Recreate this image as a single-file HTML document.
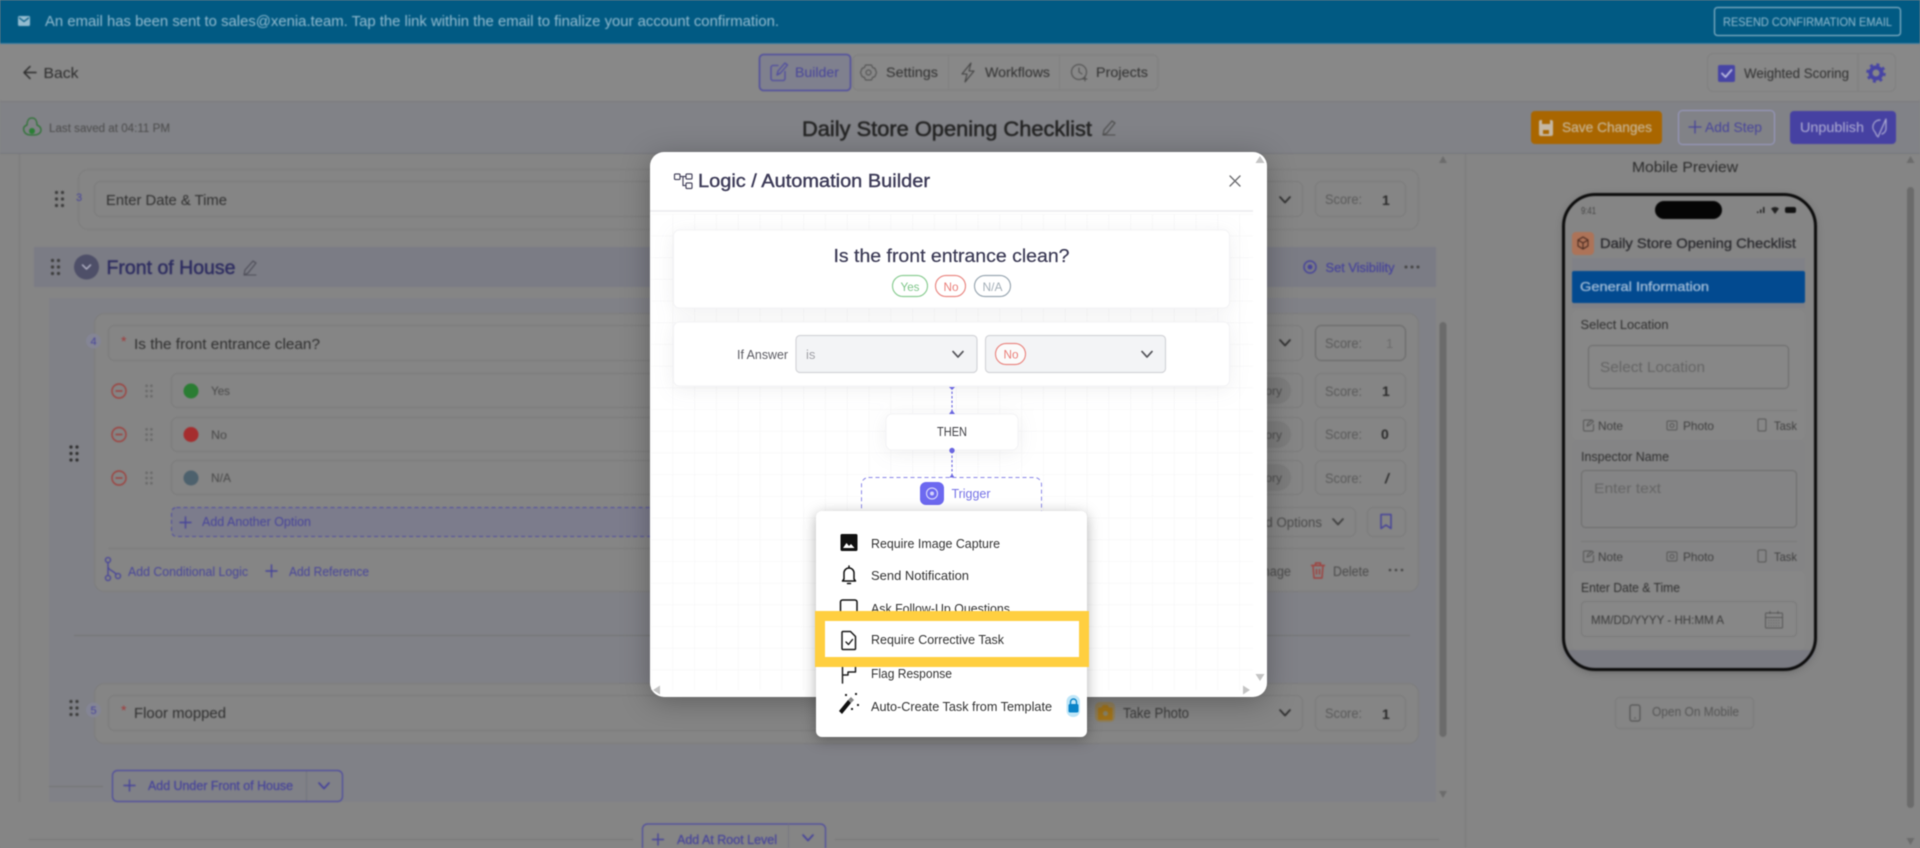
<!DOCTYPE html>
<html><head><meta charset="utf-8"><title>Logic / Automation Builder</title>
<style>
html,body{margin:0;padding:0;width:1920px;height:848px;overflow:hidden;background:#858585}
svg{display:block;filter:blur(.45px)}
text{font-family:"Liberation Sans",sans-serif}
.s{fill:none;stroke-linecap:round;stroke-linejoin:round}
</style></head><body>
<svg width="1920" height="848" viewBox="0 0 1920 848" xmlns="http://www.w3.org/2000/svg">
<defs>
<g id="drag"><circle cx="-3" cy="-6.500" r="1.600"/><circle cx="3" cy="-6.500" r="1.600"/><circle cx="-3" cy="0" r="1.600"/><circle cx="3" cy="0" r="1.600"/><circle cx="-3" cy="6.500" r="1.600"/><circle cx="3" cy="6.500" r="1.600"/></g>
<path id="chev" class="s" d="M-5-3L0 2.500 5-3" stroke-width="1.700"/>
<pattern id="grid" width="21.800" height="21.700" patternUnits="userSpaceOnUse" x="672.600" y="214"><path d="M0 0H21.800M0 0V21.700" stroke="#f4f4f5" fill="none"/></pattern>
</defs>

<g style="filter:blur(.5px)">
<!-- base -->
<rect width="1920" height="848" fill="#858585"/>
<rect width="1920" height="43" fill="#015a83"/>
<rect y="43" width="1920" height="1" fill="#3f7fa3"/>
<rect y="44" width="1920" height="57" fill="#888"/>
<rect y="101" width="1920" height="1" fill="#7b7c7e"/>
<rect y="102" width="1920" height="51" fill="#818287"/>
<rect y="153" width="1920" height="1" fill="#75767c"/>

<!-- banner -->
<rect x="18" y="16" width="12" height="10" rx="1.500" fill="#94bcd0"/><path class="s" d="M19.500 18l4.500 3.500 4.500-3.500" stroke="#015a83" stroke-width="1.200"/>
<text x="45" y="26" font-size="14.500" fill="#95bdd1" textLength="734" lengthAdjust="spacingAndGlyphs">An email has been sent to sales@xenia.team. Tap the link within the email to finalize your account confirmation.</text>
<rect x="1714.500" y="7.500" width="186" height="28" rx="3" fill="none" stroke="#a2c2d3"/>
<text x="1723" y="26" font-size="11.500" fill="#95bdd1" textLength="169" lengthAdjust="spacingAndGlyphs">RESEND CONFIRMATION EMAIL</text>

<!-- back -->
<path class="s" d="M36 72.500H25M30 66.500l-6 6 6 6" stroke="#2c2c2c" stroke-width="1.500"/>
<text x="43.500" y="78" font-size="15" fill="#2c2c2c" textLength="35" lengthAdjust="spacingAndGlyphs">Back</text>

<!-- tabs -->
<rect x="853" y="55" width="305" height="35" rx="5" fill="#888" stroke="#7f7f7f"/>
<path d="M948.500 55v35M1059.500 55v35" stroke="#7f7f7f"/>
<rect x="759.500" y="54.500" width="91" height="36" rx="4" fill="#7f808e" stroke="#4f4ca0" stroke-width="1.500"/>
<path class="s" d="M778 65.500h-5a2 2 0 0 0-2 2v11a2 2 0 0 0 2 2h10a2 2 0 0 0 2-2v-7M777 75l1-4 7-8 2.500 2-7 8z" stroke="#4f4ca0" stroke-width="1.300"/>
<text x="795" y="77" font-size="14" fill="#47449a" textLength="44" lengthAdjust="spacingAndGlyphs">Builder</text>
<circle cx="868.500" cy="72.500" r="2.500" class="s" stroke="#4a4a4a" stroke-width="1"/><path class="s" d="M865.500 65h6l1 2.500 2.500 1 1.500 4-1.500 4-2.500 1-1 2.500h-6l-1-2.500-2.500-1-1.500-4 1.500-4 2.500-1z" stroke="#4a4a4a" stroke-width="1"/>
<text x="886" y="77" font-size="14" fill="#2f2f2f" textLength="52" lengthAdjust="spacingAndGlyphs">Settings</text>
<path class="s" d="M971 63l-9 11h5l-2 8 9-11h-5z" stroke="#3f3f3f" stroke-width="1"/>
<text x="985" y="77" font-size="14" fill="#2f2f2f" textLength="65" lengthAdjust="spacingAndGlyphs">Workflows</text>
<circle cx="1079" cy="72" r="7.500" class="s" stroke="#4a4a4a" stroke-width="1"/><path class="s" d="M1079 68v4l3 2M1083 79h4M1085 77v4" stroke="#4a4a4a" stroke-width="1"/>
<text x="1096" y="77" font-size="14" fill="#2f2f2f" textLength="52" lengthAdjust="spacingAndGlyphs">Projects</text>

<!-- weighted -->
<rect x="1707.500" y="53.500" width="188" height="38" rx="6" fill="#888" stroke="#7f7f7f"/>
<path d="M1858 54v37" stroke="#7f7f7f"/>
<rect x="1718" y="65" width="17" height="17" rx="2" fill="#4744a5"/><path class="s" d="M1722 73.500l3.500 3.500 6-7" stroke="#bcbce0" stroke-width="1.800"/>
<text x="1744" y="78" font-size="14" fill="#2f2f2f" textLength="105" lengthAdjust="spacingAndGlyphs">Weighted Scoring</text>
<circle cx="1876" cy="73" r="5.500" fill="none" stroke="#4744a5" stroke-width="4"/><circle cx="1876" cy="73" r="8.500" fill="none" stroke="#4744a5" stroke-width="2.500" stroke-dasharray="3 3.700"/>

<!-- save row -->
<path class="s" d="M32 118c-4 0-5 4-5 7-3 1-4 3-3 6 1 3 4 4 7 4h3c4 0 7-2 7-5 0-3-2-4-4-5 0-3-1-7-5-7z" stroke="#2a7332" stroke-width="1.300"/><circle cx="32" cy="131" r="3" fill="#2a7f35"/>
<text x="49" y="132" font-size="11.500" fill="#4a4a4a" textLength="121" lengthAdjust="spacingAndGlyphs">Last saved at 04:11 PM</text>
<text x="802" y="136" font-size="21" fill="#242424" stroke="#242424" stroke-width=".5" textLength="290" lengthAdjust="spacingAndGlyphs">Daily Store Opening Checklist</text>
<path class="s" d="M1103 135l1-5 8-9 3 2-8 10zM1103 135h12" stroke="#4a4a4a" stroke-width="1.100"/>
<rect x="1531" y="111" width="131" height="33" rx="4" fill="#a96600"/>
<rect x="1539" y="120" width="14" height="16" rx="2" fill="#c4b8a6"/><rect x="1542" y="120" width="8" height="4" fill="#a96600"/><rect x="1543" y="130" width="6" height="4" fill="#a96600"/>
<text x="1562" y="132" font-size="14" fill="#c8b594" stroke="#c8b594" stroke-width=".2" textLength="90" lengthAdjust="spacingAndGlyphs">Save Changes</text>
<rect x="1678.500" y="110.500" width="96" height="34" rx="4" fill="none" stroke="#9a9ac6"/>
<path class="s" d="M1695 121v12M1689 127h12" stroke="#47449a" stroke-width="1.300"/>
<text x="1705" y="132" font-size="14" fill="#47449a" textLength="57" lengthAdjust="spacingAndGlyphs">Add Step</text>
<rect x="1790" y="111" width="106" height="33" rx="4" fill="#4641a2"/>
<text x="1800" y="132" font-size="14" fill="#b0aed4" textLength="64" lengthAdjust="spacingAndGlyphs">Unpublish</text>
<path class="s" d="M1880 120a7 7 0 0 0-5 12l2 4M1886 119l-8 18" stroke="#b0aed4" stroke-width="1.200"/><path class="s" d="M1886 120v8a6 6 0 0 1-4 6" stroke="#b0aed4" stroke-width="1.200"/>

<!-- left panel -->
<path d="M19.500 154v648" stroke="#7a7a7a"/>
<rect x="49" y="298" width="1387" height="504" fill="#808187"/>
<rect x="34" y="247" width="1402" height="40" fill="#7b7c85"/>
<rect x="78.500" y="169.500" width="1340" height="60" rx="10" fill="#858585" stroke="#7c7c7c"/>
<rect x="94.500" y="181.500" width="1208" height="35" rx="6" fill="#858585" stroke="#7b7b7b"/>
<rect x="1315.500" y="181.500" width="90" height="35" rx="6" fill="#858585" stroke="#7b7b7b"/>
<use href="#drag" x="59.500" y="199" fill="#3c3c3c"/>
<text x="76" y="201" font-size="11" fill="#47449a">3</text>
<text x="106" y="205" font-size="15" fill="#2f2f2f" textLength="121" lengthAdjust="spacingAndGlyphs">Enter Date &amp; Time</text>
<use href="#chev" x="1285" y="200" stroke="#2f2f2f"/>
<text x="1325" y="204" font-size="14" fill="#5a5a5a" textLength="37" lengthAdjust="spacingAndGlyphs">Score:</text>
<text x="1382" y="205" font-size="14" font-weight="bold" fill="#2a2a2a">1</text>

<use href="#drag" x="55.500" y="267" fill="#3c3c3c"/>
<circle cx="86.500" cy="267" r="12.500" fill="#4e4f68"/><path class="s" d="M82.500 265l4 4 4-4" stroke="#b5b5c8" stroke-width="1.500"/>
<text x="106.500" y="274" font-size="19" fill="#2d2c60" stroke="#2d2c60" stroke-width=".45" textLength="129" lengthAdjust="spacingAndGlyphs">Front of House</text>
<path class="s" d="M244 275l1-5 8-9 3 2-8 10zM244 275h12" stroke="#4d4d58" stroke-width="1.100"/>
<circle cx="1310" cy="267" r="6" fill="none" stroke="#47449a" stroke-width="1.500"/><circle cx="1310" cy="267" r="2.500" fill="#47449a"/>
<text x="1325.500" y="272" font-size="13" fill="#47449a" stroke="#47449a" stroke-width=".25" textLength="69" lengthAdjust="spacingAndGlyphs">Set Visibility</text>
<g fill="#444"><circle cx="1406" cy="267" r="1.500"/><circle cx="1412" cy="267" r="1.500"/><circle cx="1418" cy="267" r="1.500"/></g>

<!-- Q4 -->
<rect x="94.500" y="313.500" width="1324" height="278" rx="10" fill="#858585" stroke="#7c7c7c"/>
<rect x="108.500" y="325.500" width="1194" height="35" rx="6" fill="#858585" stroke="#7b7b7b"/>
<circle cx="93.500" cy="341" r="7.500" fill="#848595"/><text x="90.500" y="345" font-size="11" fill="#47449a">4</text>
<text x="121" y="346" font-size="14" fill="#a03a3a">*</text>
<text x="134" y="349" font-size="15" fill="#2f2f2f" textLength="186" lengthAdjust="spacingAndGlyphs">Is the front entrance clean?</text>
<use href="#chev" x="1285" y="343" stroke="#2f2f2f"/>
<rect x="1315.500" y="325.500" width="90" height="35" rx="6" fill="#858585" stroke="#6c6c6c" stroke-width="1.200"/>
<text x="1325" y="348" font-size="14" fill="#5a5a5a" textLength="37" lengthAdjust="spacingAndGlyphs">Score:</text><text x="1386" y="348" font-size="13" fill="#6c6c6c">1</text>
<use href="#drag" x="74" y="453.500" fill="#2f2f2f"/>

<g fill="none" stroke="#7b7b7b"><rect x="171.500" y="373.500" width="1131" height="34" rx="6"/><rect x="171.500" y="417.500" width="1131" height="34" rx="6"/><rect x="171.500" y="460.500" width="1131" height="34" rx="6"/>
<rect x="1315.500" y="373.500" width="90" height="34" rx="6"/><rect x="1315.500" y="417.500" width="90" height="34" rx="6"/><rect x="1315.500" y="460.500" width="90" height="34" rx="6"/></g>
<g fill="none" stroke="#9f403d" stroke-width="1.400"><circle cx="119" cy="391" r="7"/><circle cx="119" cy="434.500" r="7"/><circle cx="119" cy="478" r="7"/><path d="M115.500 391h7M115.500 434.500h7M115.500 478h7"/></g>
<g fill="#686868"><use href="#drag" transform="translate(149 391) scale(.8)"/><use href="#drag" transform="translate(149 434.500) scale(.8)"/><use href="#drag" transform="translate(149 478) scale(.8)"/></g>
<circle cx="191" cy="391" r="7.500" fill="#2a7d33"/><circle cx="191" cy="434.500" r="7.500" fill="#a52d2e"/><circle cx="191" cy="478" r="7.500" fill="#4d616d"/>
<text x="211" y="395" font-size="12" fill="#484848" textLength="19" lengthAdjust="spacingAndGlyphs">Yes</text>
<text x="211" y="439" font-size="12" fill="#484848" textLength="16" lengthAdjust="spacingAndGlyphs">No</text>
<text x="211" y="482" font-size="12" fill="#484848" textLength="20" lengthAdjust="spacingAndGlyphs">N/A</text>
<g fill="#7c7c7c"><rect x="1230" y="377" width="61" height="27" rx="13.500"/><rect x="1230" y="421" width="61" height="27" rx="13.500"/><rect x="1230" y="464" width="61" height="27" rx="13.500"/></g>
<g font-size="12" fill="#4d4d4d"><text x="1262" y="395">tory</text><text x="1262" y="439">tory</text><text x="1262" y="482">tory</text></g>
<g font-size="14" fill="#5a5a5a"><text x="1325" y="396" textLength="37" lengthAdjust="spacingAndGlyphs">Score:</text><text x="1325" y="439" textLength="37" lengthAdjust="spacingAndGlyphs">Score:</text><text x="1325" y="483" textLength="37" lengthAdjust="spacingAndGlyphs">Score:</text></g>
<g font-size="14" font-weight="bold" fill="#2a2a2a"><text x="1382" y="396">1</text><text x="1381" y="439">0</text><text x="1385" y="483" font-style="italic">/</text></g>

<rect x="171.500" y="507.500" width="1000" height="29" rx="5" fill="#7c7c8c" stroke="#4f4ca0" stroke-dasharray="4 3"/>
<path class="s" d="M185.500 517v11M180 522.500h11" stroke="#47449a" stroke-width="1.400"/>
<text x="202" y="526" font-size="13" fill="#47449a" textLength="109" lengthAdjust="spacingAndGlyphs">Add Another Option</text>
<path d="M108 548.500H1405" stroke="#7b7b7b"/>
<g stroke="#47449a" stroke-width="1.300" fill="none"><circle cx="108" cy="560" r="2.500"/><circle cx="108" cy="578" r="2.500"/><circle cx="118" cy="576" r="2.500"/><path d="M108 563v12M108 566c0 4 4 4 8 8"/></g>
<text x="128" y="576" font-size="13" fill="#47449a" textLength="120" lengthAdjust="spacingAndGlyphs">Add Conditional Logic</text>
<path class="s" d="M271.500 565v12M266 571h11" stroke="#47449a" stroke-width="1.400"/>
<text x="289" y="576" font-size="13" fill="#47449a" textLength="80" lengthAdjust="spacingAndGlyphs">Add Reference</text>

<rect x="1200.500" y="507.500" width="155" height="29" rx="6" fill="#858585" stroke="#7b7b7b"/>
<text x="1214" y="527" font-size="13.500" fill="#4a4a4a" textLength="108" lengthAdjust="spacingAndGlyphs">Advanced Options</text>
<use href="#chev" x="1338" y="522" stroke="#3f3f3f"/>
<rect x="1367.500" y="507.500" width="38" height="29" rx="6" fill="#858585" stroke="#7b7b7b"/>
<path class="s" d="M1381 514.500h10v14l-5-3.500-5 3.500z" stroke="#47449a" stroke-width="1.500"/>
<text x="1245" y="576" font-size="13.500" fill="#4a4a4a" textLength="46" lengthAdjust="spacingAndGlyphs">Manage</text>
<path class="s" d="M1311.500 565.500h13M1315.500 565.500v-2.500h5v2.500M1313 565.500l1 12.500h8l1-12.500M1316.500 569.500v4.500M1319.500 569.500v4.500" stroke="#9f403d" stroke-width="1.400"/>
<text x="1333" y="576" font-size="13.500" fill="#4a4a4a" textLength="36" lengthAdjust="spacingAndGlyphs">Delete</text>
<g fill="#444"><circle cx="1390" cy="570" r="1.300"/><circle cx="1396" cy="570" r="1.300"/><circle cx="1402" cy="570" r="1.300"/></g>

<path d="M74 635.500H1410" stroke="#747474"/>

<!-- Q5 -->
<rect x="94.500" y="683.500" width="1324" height="60" rx="10" fill="#858585" stroke="#7c7c7c"/>
<rect x="108.500" y="695.500" width="1194" height="35" rx="6" fill="#858585" stroke="#7b7b7b"/>
<use href="#drag" x="74" y="708" fill="#3c3c3c"/>
<circle cx="93.500" cy="710" r="7.500" fill="#848595"/><text x="90.500" y="714" font-size="11" fill="#47449a">5</text>
<text x="121" y="715" font-size="14" fill="#a03a3a">*</text>
<text x="134" y="718" font-size="15" fill="#2f2f2f" textLength="92" lengthAdjust="spacingAndGlyphs">Floor mopped</text>
<rect x="1095" y="702" width="20" height="20" rx="5" fill="#9a7a35" opacity=".55"/><path d="M1098 709q0-1.500 1.500-1.500h2l1.500-2.500h4.500l1.500 2.500h2q1.500 0 1.500 1.500v10q0 1-1.500 1h-11.500q-1.500 0-1.500-1z" fill="#a2741a"/><circle cx="1105.500" cy="713.500" r="2.500" fill="#8a8468"/>
<text x="1123" y="718" font-size="14.500" fill="#3a3a3a" textLength="66" lengthAdjust="spacingAndGlyphs">Take Photo</text>
<use href="#chev" x="1285" y="713" stroke="#2f2f2f"/>
<rect x="1315.500" y="695.500" width="90" height="35" rx="6" fill="#858585" stroke="#7b7b7b"/>
<text x="1325" y="718" font-size="14" fill="#5a5a5a" textLength="37" lengthAdjust="spacingAndGlyphs">Score:</text>
<text x="1382" y="719" font-size="14" font-weight="bold" fill="#2a2a2a">1</text>

<!-- add under -->
<path d="M49 786.500H103" stroke="#747474"/>
<rect x="112.500" y="770.500" width="230" height="31" rx="5" fill="#808187" stroke="#4d4aa0" stroke-width="1.200"/>
<path d="M306.500 771v30" stroke="#72737f"/>
<path class="s" d="M129.500 780v11M124 785.500h11" stroke="#47449a" stroke-width="1.400"/>
<text x="148" y="790" font-size="13" fill="#47449a" stroke="#47449a" stroke-width=".25" textLength="145" lengthAdjust="spacingAndGlyphs">Add Under Front of House</text>
<use href="#chev" x="324" y="786" stroke="#47449a"/>

<path d="M29 839.500H633M835 839.500H1439" stroke="#757575"/>
<rect x="642.500" y="824" width="183" height="40" rx="5" fill="#858585" stroke="#4d4aa0" stroke-width="1.200"/>
<path d="M788.500 824v24" stroke="#757681"/>
<path class="s" d="M658 834v11M652.500 839.500h11" stroke="#47449a" stroke-width="1.400"/>
<text x="677" y="844" font-size="13" fill="#47449a" stroke="#47449a" stroke-width=".25" textLength="100" lengthAdjust="spacingAndGlyphs">Add At Root Level</text>
<use href="#chev" x="808" y="838" stroke="#47449a"/>

<!-- left scrollbar -->
<rect x="1439.500" y="322" width="7" height="415" rx="3.500" fill="#6b6b6b"/>
<path d="M1443 156l4 7h-8zM1443 798l4-7h-8z" fill="#6c6c6c"/>
<path d="M1465.500 154V848" stroke="#7b7b7b"/>
<rect x="1907" y="187" width="7" height="621" rx="3.500" fill="#6b6b6b"/>
<path d="M1910.500 156l4 7h-8zM1910.500 845l4-7h-8z" fill="#6c6c6c"/>

<!-- preview -->
<text x="1632" y="172" font-size="14.500" fill="#2b2b2b" textLength="106" lengthAdjust="spacingAndGlyphs">Mobile Preview</text>
<rect x="1563.500" y="194.500" width="252" height="475" rx="32" fill="#858585" style="filter:drop-shadow(0 2px 4px rgba(0,0,0,.25))"/>
<path d="M1564 650h251v-1 0 -1 1 1c0 11-14 19-30 19h-191c-16 0-30-8-30-19z" fill="#7a7b82"/>
<rect x="1572" y="258" width="233" height="50" fill="#808187"/>
<rect x="1563.500" y="194.500" width="252" height="475" rx="32" fill="none" stroke="#0c0c0c" stroke-width="3"/>
<rect x="1655" y="201" width="67" height="18" rx="9" fill="#050505"/>
<text x="1581" y="214" font-size="10.500" fill="#444" textLength="15" lengthAdjust="spacingAndGlyphs">9:41</text>
<path d="M1757 213h1.500v-1.500h-1.500zM1760 213h1.500v-3.500h-1.500zM1763 213h1.500v-6h-1.500z" fill="#222"/>
<path d="M1771 208.500q4-3 8 0l-4 5.500z" fill="#222"/><rect x="1785" y="207" width="11" height="6" rx="2" fill="#111"/>
<rect x="1572" y="232" width="22" height="23" rx="4" fill="#ad7358"/>
<path class="s" d="M1583 237l5 3v6l-5 3-5-3v-6zM1578 240l5 3 5-3M1583 243v6" stroke="#4a2a20" stroke-width="1.100"/>
<text x="1600" y="248" font-size="14" fill="#2a2a2e" stroke="#2a2a2e" stroke-width=".3" textLength="196" lengthAdjust="spacingAndGlyphs">Daily Store Opening Checklist</text>
<rect x="1572" y="271" width="233" height="32" rx="2" fill="#024a90"/>
<text x="1580" y="291" font-size="13" fill="#a3bdd8" stroke="#a3bdd8" stroke-width=".3" textLength="129" lengthAdjust="spacingAndGlyphs">General Information</text>
<rect x="1572" y="310" width="233" height="130" rx="6" fill="#878787"/>
<rect x="1572" y="440" width="233" height="131" rx="6" fill="#848485"/>
<rect x="1572" y="571" width="233" height="79" rx="6" fill="#878787"/>
<text x="1580.500" y="329" font-size="13" fill="#2f2f2f" textLength="88" lengthAdjust="spacingAndGlyphs">Select Location</text>
<rect x="1588.500" y="345.500" width="200" height="43" rx="4" fill="none" stroke="#6c6c6c"/>
<text x="1600" y="372" font-size="15" fill="#646464" textLength="105" lengthAdjust="spacingAndGlyphs">Select Location</text>
<path d="M1581 410.500H1797M1581 541.500H1797" stroke="#797979"/>
<g><path class="s" d="M1591 420h-6a1.500 1.500 0 0 0-1.500 1.500v8a1.500 1.500 0 0 0 1.500 1.500h7a1.500 1.500 0 0 0 1.500-1.500v-5M1587 426l1-3 4-3 1.500 1.500-4 3.500z" stroke="#555" stroke-width="1"/>
<rect x="1667" y="421" width="10" height="9" rx="1.500" fill="none" stroke="#555"/><circle cx="1672" cy="425.500" r="2" fill="none" stroke="#555"/>
<rect x="1758" y="419" width="8" height="12" rx="1.500" fill="none" stroke="#555"/>
<text x="1598" y="430" font-size="12" fill="#3f3f3f" textLength="25" lengthAdjust="spacingAndGlyphs">Note</text>
<text x="1683" y="430" font-size="12" fill="#3f3f3f" textLength="31" lengthAdjust="spacingAndGlyphs">Photo</text>
<text x="1774" y="430" font-size="12" fill="#3f3f3f" textLength="23" lengthAdjust="spacingAndGlyphs">Task</text></g>
<text x="1581" y="461" font-size="13" fill="#2f2f2f" textLength="88" lengthAdjust="spacingAndGlyphs">Inspector Name</text>
<rect x="1581.500" y="470.500" width="215" height="57" rx="4" fill="none" stroke="#6c6c6c"/>
<text x="1594" y="493" font-size="14" fill="#646464" textLength="67" lengthAdjust="spacingAndGlyphs">Enter text</text>
<g transform="translate(0 131)"><path class="s" d="M1591 420h-6a1.500 1.500 0 0 0-1.500 1.500v8a1.500 1.500 0 0 0 1.500 1.500h7a1.500 1.500 0 0 0 1.500-1.500v-5M1587 426l1-3 4-3 1.500 1.500-4 3.500z" stroke="#555" stroke-width="1"/>
<rect x="1667" y="421" width="10" height="9" rx="1.500" fill="none" stroke="#555"/><circle cx="1672" cy="425.500" r="2" fill="none" stroke="#555"/>
<rect x="1758" y="419" width="8" height="12" rx="1.500" fill="none" stroke="#555"/>
<text x="1598" y="430" font-size="12" fill="#3f3f3f" textLength="25" lengthAdjust="spacingAndGlyphs">Note</text>
<text x="1683" y="430" font-size="12" fill="#3f3f3f" textLength="31" lengthAdjust="spacingAndGlyphs">Photo</text>
<text x="1774" y="430" font-size="12" fill="#3f3f3f" textLength="23" lengthAdjust="spacingAndGlyphs">Task</text></g>
<text x="1581" y="592" font-size="13" fill="#2f2f2f" textLength="99" lengthAdjust="spacingAndGlyphs">Enter Date &amp; Time</text>
<rect x="1581.500" y="601.500" width="215" height="35" rx="4" fill="none" stroke="#777"/>
<text x="1591" y="624" font-size="12" fill="#3a3a3a" textLength="133" lengthAdjust="spacingAndGlyphs">MM/DD/YYYY - HH:MM A</text>
<rect x="1765.500" y="613" width="17" height="15" rx="1" fill="none" stroke="#555"/><path d="M1765 617.500h18M1770 611v3M1778 611v3" stroke="#555"/><path d="M1768 620.500h12M1768 623h12M1768 625.500h12" stroke="#666" stroke-dasharray="1.500 1"/>
<rect x="1615.500" y="697.500" width="138" height="31" rx="4" fill="none" stroke="#7b7b7b"/>
<rect x="1630" y="705" width="10" height="16" rx="2" fill="none" stroke="#555" stroke-width="1.200"/><circle cx="1635" cy="718" r=".8" fill="#555"/>
<text x="1652" y="716" font-size="12.500" fill="#555" textLength="87" lengthAdjust="spacingAndGlyphs">Open On Mobile</text>
</g>

<!-- modal -->
<rect x="650" y="152" width="617" height="545" rx="14" fill="#fff" style="filter:drop-shadow(0 5px 14px rgba(0,0,0,.28))"/>
<rect x="651" y="214" width="602" height="476" fill="url(#grid)"/>
<rect x="650" y="210" width="603" height="2" fill="#efeff1"/>
<g stroke="#4a4860" stroke-width="1.200" fill="none"><rect x="674.500" y="174" width="5.500" height="5.500" rx="1"/><rect x="686" y="174" width="6" height="5" rx="1"/><rect x="686" y="183" width="6" height="5.500" rx="1"/><path d="M680 176.500h6M683 176.500v9h3"/></g>
<text x="698" y="187" font-size="18" fill="#3d3b58" stroke="#3d3b58" stroke-width=".4" textLength="232" lengthAdjust="spacingAndGlyphs">Logic / Automation Builder</text>
<path class="s" d="M1230 176l10 10M1240 176l-10 10" stroke="#6e6e72" stroke-width="1.400"/>
<path d="M1260 156l4.500 7h-9z" fill="#c4c4c4"/><path d="M1260 681l4.500-7h-9z" fill="#c4c4c4"/><path d="M653 690l7-4.500v9z" fill="#c4c4c4"/><path d="M1250 690l-7-4.500v9z" fill="#c4c4c4"/>

<g style="filter:drop-shadow(0 3px 10px rgba(60,60,80,.08))" fill="#fff">
<rect x="673.500" y="230" width="556" height="78" rx="6" stroke="#f3f3f5"/>
<rect x="673.500" y="322" width="556" height="64" rx="6" stroke="#f3f3f5"/>
<rect x="886" y="414" width="132" height="36" rx="6" stroke="#f3f3f5"/>
</g>
<text x="833.500" y="262" font-size="18" fill="#3b3a55" stroke="#3b3a55" stroke-width=".2" textLength="236" lengthAdjust="spacingAndGlyphs">Is the front entrance clean?</text>
<rect x="892.500" y="275.500" width="35" height="21" rx="10.500" fill="#fff" stroke="#8ccd94" stroke-width="1.200"/><text x="900.500" y="291" font-size="12" fill="#7fc68a" textLength="19" lengthAdjust="spacingAndGlyphs">Yes</text>
<rect x="935.500" y="275.500" width="30" height="21" rx="10.500" fill="#fff" stroke="#ea8a85" stroke-width="1.200"/><text x="943.500" y="291" font-size="12" fill="#ea7f7a" textLength="15" lengthAdjust="spacingAndGlyphs">No</text>
<rect x="974.500" y="275.500" width="36" height="21" rx="10.500" fill="#fff" stroke="#9aa8b3" stroke-width="1.200"/><text x="982.500" y="291" font-size="12" fill="#a4afb8" textLength="20" lengthAdjust="spacingAndGlyphs">N/A</text>
<text x="737" y="359" font-size="12.500" fill="#5d5d64" textLength="51" lengthAdjust="spacingAndGlyphs">If Answer</text>
<rect x="796" y="335.500" width="181" height="37" rx="4" fill="#f3f4f6" stroke="#d4d5d9" stroke-width="1.200"/>
<rect x="985.500" y="335.500" width="180" height="37" rx="4" fill="#f3f4f6" stroke="#d4d5d9" stroke-width="1.200"/>
<text x="806" y="359" font-size="13" fill="#a2a2a8">is</text>
<use href="#chev" x="958" y="354.500" stroke="#5a5a5f"/><use href="#chev" x="1147" y="354.500" stroke="#5a5a5f"/>
<rect x="995.500" y="343.500" width="30" height="21" rx="10.500" fill="#fbfbfb" stroke="#ea8a85" stroke-width="1.200"/><text x="1003.500" y="358.500" font-size="12" fill="#ea7f7a" textLength="15" lengthAdjust="spacingAndGlyphs">No</text>

<path d="M952 387v27M952 451v27" stroke="#6a66e0" stroke-width="1.100" stroke-dasharray="2.500 2"/>
<path d="M949 387h6l-3 3zM949 414h6l-3-4zM949 478h6l-3-4z" fill="#6a66e0"/>
<circle cx="952" cy="450.500" r="2.700" fill="#6a66e0"/>
<text x="937" y="436" font-size="12.500" fill="#3f3f44" textLength="30" lengthAdjust="spacingAndGlyphs">THEN</text>
<rect x="861.500" y="477.500" width="180" height="50" rx="7" fill="#fff" stroke="#8a87e8" stroke-dasharray="4 3"/>
<rect x="920" y="482" width="24" height="23" rx="6" fill="#6d69f0"/><circle cx="932" cy="493.500" r="5.500" fill="none" stroke="#d3d2fb" stroke-width="1.200"/><circle cx="932" cy="493.500" r="2" fill="#d3d2fb"/>
<text x="951.500" y="498" font-size="12.500" fill="#7673e6" textLength="39" lengthAdjust="spacingAndGlyphs">Trigger</text>

<!-- popup -->
<rect x="816" y="511" width="271" height="226" rx="6" fill="#fff" style="filter:drop-shadow(0 3px 7px rgba(0,0,0,.3))"/>
<g font-size="13" fill="#333">
<text x="871" y="548" textLength="129" lengthAdjust="spacingAndGlyphs">Require Image Capture</text>
<text x="871" y="580" textLength="98" lengthAdjust="spacingAndGlyphs">Send Notification</text>
<text x="871" y="613" textLength="139" lengthAdjust="spacingAndGlyphs">Ask Follow-Up Questions</text>
<text x="871" y="678" textLength="81" lengthAdjust="spacingAndGlyphs">Flag Response</text>
<text x="871" y="711" textLength="181" lengthAdjust="spacingAndGlyphs">Auto-Create Task from Template</text>
</g>
<rect x="840.500" y="534" width="17" height="17" rx="1.500" fill="#111"/><path d="M843 548l3.500-5 2.500 3 2-2 3.500 4z" fill="#fff"/>
<path class="s" d="M844 579v-6a5 5 0 0 1 10 0v6l1.500 2h-13zM849 566v2" stroke="#111" stroke-width="1.500"/><path class="s" d="M847.500 583.500h3" stroke="#111" stroke-width="1.500"/>
<rect x="840.500" y="600" width="16.500" height="18" rx="2" fill="none" stroke="#111" stroke-width="1.500"/>
<path class="s" d="M842.500 683V660M842.500 675h5.500v-3h7.500v-10" stroke="#222" stroke-width="1.500"/>
<path d="M839 711l9-11 3 3-9 11z" fill="#111"/><path d="M848 700l3-3 3 3-3 3z" fill="#888"/>
<g fill="#222"><rect x="845" y="694" width="2" height="2"/><rect x="855" y="693" width="2" height="2"/><rect x="857" y="704" width="2" height="2"/><rect x="851" y="708" width="2" height="2"/></g>
<rect x="1066.500" y="695" width="13.500" height="22" rx="6.500" fill="#bfe6f8"/><rect x="1068.500" y="704" width="10" height="8.500" rx="1.500" fill="#0a84c9"/><path class="s" d="M1070.500 704v-2a3 3 0 0 1 6 0v2" stroke="#0a84c9" stroke-width="1.400"/>

<!-- highlight -->
<rect x="815" y="611" width="274" height="56" fill="#ffcf40"/>
<rect x="825" y="621" width="254" height="36" fill="#fff"/>
<path class="s" d="M843 631.500h7.500l5 5v12a1 1 0 0 1-1 1h-11.500a1 1 0 0 1-1-1v-16a1 1 0 0 1 1-1z" stroke="#1c1c1c" stroke-width="1.500"/>
<path class="s" d="M846 642l2.500 2.500 4-5" stroke="#1c1c1c" stroke-width="1.400"/>
<text x="871" y="644" font-size="13" fill="#333" textLength="133" lengthAdjust="spacingAndGlyphs">Require Corrective Task</text>
</svg>
</body></html>
